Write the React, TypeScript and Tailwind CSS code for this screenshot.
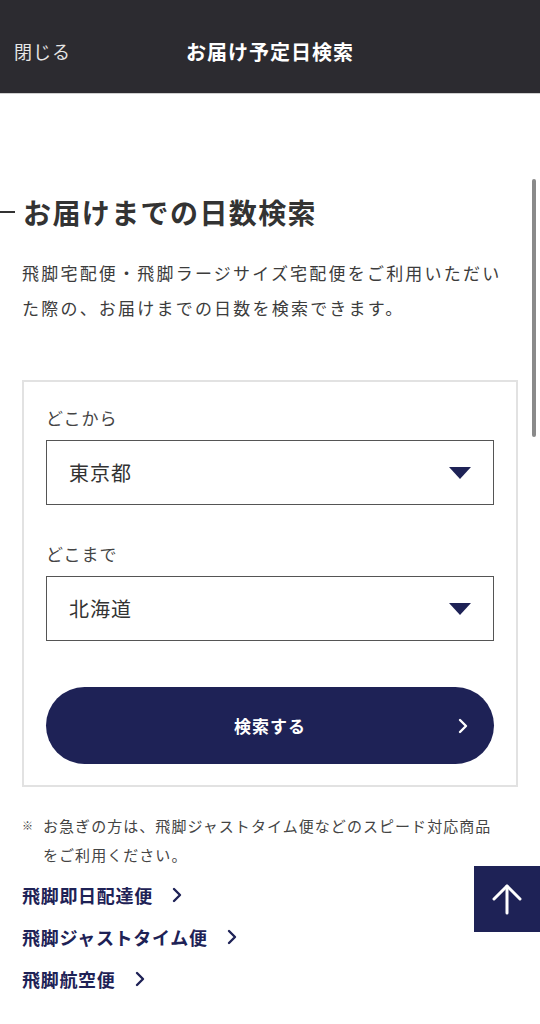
import * as React from 'react';

const NAVY = 'text-[#1e2256]';

function Chevron({ className }: { className?: string }) {
  return (
    <svg viewBox="0 0 12 16" className={className} fill="none" stroke="currentColor" strokeWidth={2.4} strokeLinecap="round" strokeLinejoin="round">
      <polyline points="3,2 9,8 3,14" />
    </svg>
  );
}

function Select({ value }: { value: string }) {
  return (
    <div className="flex h-[65px] items-center justify-between border-[1.5px] border-[#555] pl-[22px] pr-[22px]">
      <span className="text-[20px] tracking-[1px] text-[#333]">{value}</span>
      <svg viewBox="0 0 22 12" className="h-[12px] w-[22px]">
        <polygon points="0,0 22,0 11,12" fill="#1e2256" />
      </svg>
    </div>
  );
}

const links = ['飛脚即日配達便', '飛脚ジャストタイム便', '飛脚航空便'];

export default function App() {
  return (
    <div
      className="relative min-h-[1024px] w-full overflow-hidden bg-white text-[#333]"
      style={{ fontFamily: '"Noto Sans CJK JP", "Noto Sans", sans-serif' }}
    >
      <header className="grid h-[94px] grid-cols-3 items-center border-b border-[#cfcfcf] bg-[#2c2b30] px-[14px] pt-[10px]">
        <span className="text-[18px] tracking-[1px] text-[#e6e6e6]">閉じる</span>
        <span className="justify-self-center whitespace-nowrap text-[20px] font-bold tracking-[1px] text-white">
          お届け予定日検索
        </span>
        <span />
      </header>

      <main className="pt-[98px]">
        <div className="flex items-center">
          <span className="h-[1.5px] w-[15px] bg-[#333]" />
          <h1 className="ml-[8px] text-[28px] font-bold leading-[40px] tracking-[1.4px] text-[#333]">
            お届けまでの日数検索
          </h1>
        </div>

        <div className="px-[22px]">
          <p className="mt-[23px] text-[17px] leading-[35px] tracking-[0.13em] text-[#3c3c3c]">
            飛脚宅配便・飛脚ラージサイズ宅配便をご利用いただいた際の、お届けまでの日数を検索できます。
          </p>

          <div className="mt-[55px] border-2 border-[#e2e2e2] px-[22px] pb-[21px] pt-[24px]">
            <label className="block text-[17px] leading-[24px] tracking-[1px] text-[#444]">どこから</label>
            <div className="mt-[10px]">
              <Select value="東京都" />
            </div>
            <label className="mt-[37px] block text-[17px] leading-[24px] tracking-[1px] text-[#444]">どこまで</label>
            <div className="mt-[10px]">
              <Select value="北海道" />
            </div>
            <button className="relative mt-[46px] flex h-[77px] w-full items-center justify-center rounded-full bg-[#1e2256] text-white">
              <span className="text-[17px] font-bold tracking-[1px]">検索する</span>
              <Chevron className="absolute right-[25px] h-[16px] w-[12px]" />
            </button>
          </div>

          <div className="mt-[24px] flex text-[15px] leading-[29px] tracking-[0.07em] text-[#444]">
            <span className="w-[21px] shrink-0 text-[11px]">※</span>
            <p className="max-w-[452px]">お急ぎの方は、飛脚ジャストタイム便などのスピード対応商品をご利用ください。</p>
          </div>

          <ul className="mt-[5px]">
            {links.map(l => (
              <li key={l} className={`flex h-[42px] items-center ${NAVY}`}>
                <span className="text-[18px] font-bold tracking-[0.7px]">{l}</span>
                <Chevron className="ml-[18px] h-[16px] w-[12px]" />
              </li>
            ))}
          </ul>
        </div>
      </main>

      <div className="absolute right-[4px] top-[179px] h-[258px] w-[4px] rounded-full bg-[#8a8a8a]" />

      <button className="absolute left-[474px] top-[866px] flex h-[66px] w-[66px] items-center justify-center bg-[#1e2256]">
        <svg viewBox="0 0 30 32" className="h-[32px] w-[30px]" fill="none" stroke="white" strokeWidth={3} strokeLinecap="round" strokeLinejoin="round">
          <line x1="15" y1="3" x2="15" y2="30" />
          <polyline points="2,16 15,3 28,16" />
        </svg>
      </button>
    </div>
  );
}
